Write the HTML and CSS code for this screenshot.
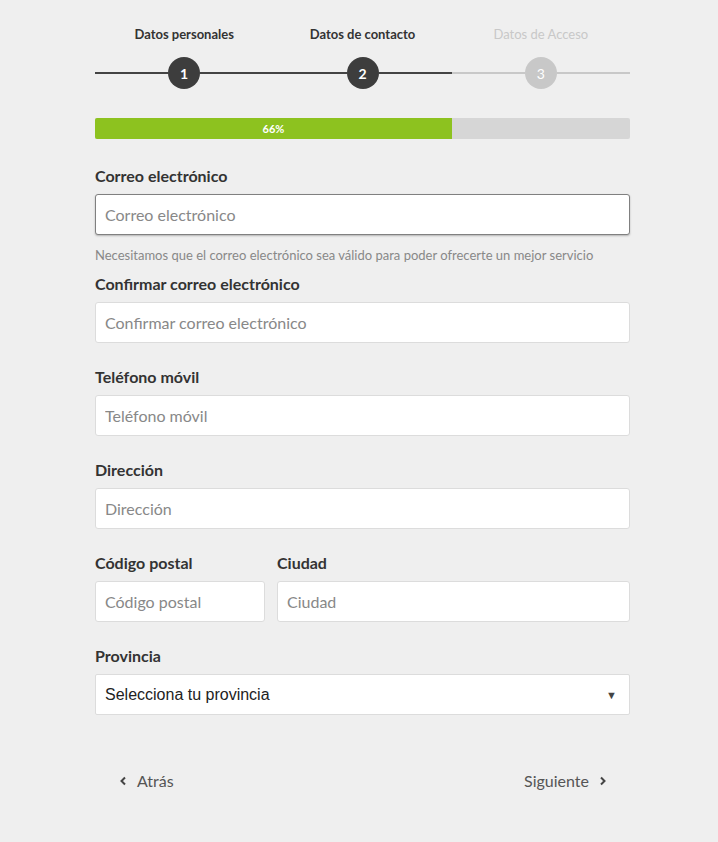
FILE: index.html
```html
<!DOCTYPE html>
<html lang="es">
<head>
<meta charset="utf-8">
<title>Datos de contacto</title>
<link rel="stylesheet" href="styles.css">
</head>
<body>
<div class="wrap">
  <div class="stepper">
    <div class="step done">
      <div class="step-label">Datos personales</div>
      <div class="step-track"><span class="seg"></span><span class="num">1</span><span class="seg"></span></div>
    </div>
    <div class="step done">
      <div class="step-label">Datos de contacto</div>
      <div class="step-track"><span class="seg"></span><span class="num">2</span><span class="seg"></span></div>
    </div>
    <div class="step todo">
      <div class="step-label">Datos de Acceso</div>
      <div class="step-track"><span class="seg"></span><span class="num">3</span><span class="seg"></span></div>
    </div>
  </div>

  <div class="progress"><div class="progress-fill" style="width:66.7%">66%</div></div>

  <form class="form">
    <div class="group with-help">
      <label class="label">Correo electrónico</label>
      <input class="input focus" type="text" placeholder="Correo electrónico">
      <p class="help">Necesitamos que el correo electrónico sea válido para poder ofrecerte un mejor servicio</p>
    </div>
    <div class="group">
      <label class="label">Confirmar correo electrónico</label>
      <input class="input" type="text" placeholder="Confirmar correo electrónico">
    </div>
    <div class="group">
      <label class="label">Teléfono móvil</label>
      <input class="input" type="text" placeholder="Teléfono móvil">
    </div>
    <div class="group">
      <label class="label">Dirección</label>
      <input class="input" type="text" placeholder="Dirección">
    </div>
    <div class="row">
      <div class="group">
        <label class="label">Código postal</label>
        <input class="input" type="text" placeholder="Código postal">
      </div>
      <div class="group">
        <label class="label">Ciudad</label>
        <input class="input" type="text" placeholder="Ciudad">
      </div>
    </div>
    <div class="group last">
      <label class="label">Provincia</label>
      <div class="select">
        <span>Selecciona tu provincia</span>
        <span class="caret">▼</span>
      </div>
    </div>
  </form>

  <div class="nav">
    <a class="nav-btn"><svg width="8" height="10" viewBox="0 0 8 10"><path d="M6 1.5 2.5 5 6 8.5" fill="none" stroke="#444" stroke-width="2"/></svg>Atrás</a>
    <a class="nav-btn">Siguiente<svg width="8" height="10" viewBox="0 0 8 10"><path d="M2 1.5 5.5 5 2 8.5" fill="none" stroke="#444" stroke-width="2"/></svg></a>
  </div>
</div>
</body>
</html>
```

FILE: styles.css
```css
* { box-sizing: border-box; }
html, body { margin: 0; padding: 0; }
body {
  background: #efefef;
  font-family: "Lato", "Open Sans", sans-serif;
  color: #333;
  width: 718px;
  height: 842px;
  overflow: hidden;
}
.wrap {
  width: 535px;
  margin-left: 95px;
  padding-top: 25px;
}
.stepper {
  display: grid;
  grid-template-columns: repeat(3, 1fr);
}
.step { display: flex; flex-direction: column; align-items: center; }
.step-label {
  font-size: 13px;
  font-weight: 700;
  line-height: 18px;
  color: #333;
}
.step.todo .step-label { color: #c8c8c8; font-weight: 400; }
.step-track {
  width: 100%;
  display: flex;
  align-items: center;
  margin-top: 14px;
}
.seg { flex: 1; height: 2px; background: #444; }
.step.todo .seg { background: #c8c8c8; }
.num {
  width: 32px; height: 32px;
  border-radius: 50%;
  background: #3d3d3d;
  color: #fff;
  font-weight: 700;
  font-size: 14px;
  display: flex; align-items: center; justify-content: center;
}
.step.todo .num { background: #c8c8c8; font-weight: 400; }

.progress {
  margin-top: 29px;
  height: 21px;
  background: #d6d6d6;
  border-radius: 2px;
  overflow: hidden;
}
.progress-fill {
  height: 100%;
  background: #8dc21f;
  color: #fff;
  font-size: 11px;
  font-weight: 700;
  line-height: 21px;
  text-align: center;
}

.form { margin-top: 26px; }
.group { margin-bottom: 23px; }
.group.with-help { margin-bottom: 9px; }
.group.last { margin-bottom: 0; }
.label {
  display: block;
  font-size: 16px;
  font-weight: 700;
  line-height: 22px;
  color: #333;
  margin-bottom: 7px;
}
.input {
  display: block;
  width: 100%;
  height: 41px;
  border: 1px solid #dcdcdc;
  border-radius: 3px;
  background: #fff;
  padding: 0 9px;
  font-family: inherit;
  font-size: 16px;
  color: #333;
  outline: none;
}
.input::placeholder { color: #888; }
.input.focus {
  border-color: #808080;
  box-shadow: 0 1px 2px rgba(0,0,0,0.25);
}
.help {
  margin: 11px 0 0;
  font-size: 13px;
  line-height: 18px;
  color: #888;
}
.row {
  display: grid;
  grid-template-columns: 170px 1fr;
  gap: 12px;
}
.select {
  height: 41px;
  background: #fff;
  border: 1px solid #dcdcdc;
  border-radius: 2px;
  padding: 0 12px 0 9px;
  display: flex;
  align-items: center;
  justify-content: space-between;
  font-family: "Liberation Sans", Arial, sans-serif;
  font-size: 16px;
  color: #222;
}
.caret { font-size: 11px; color: #444; }

.nav {
  margin-top: 55px;
  display: flex;
  justify-content: space-between;
  padding: 0 23px 0 24px;
}
.nav-btn {
  display: flex;
  align-items: center;
  gap: 10px;
  font-size: 16px;
  color: #555;
  line-height: 22px;
}
```
